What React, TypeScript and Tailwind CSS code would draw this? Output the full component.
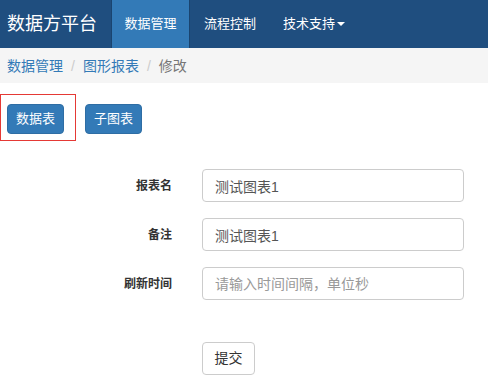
export default function App() {
  const fields = [
    { label: "报表名", value: "测试图表1", placeholder: "" },
    { label: "备注", value: "测试图表1", placeholder: "" },
    { label: "刷新时间", value: "", placeholder: "请输入时间间隔，单位秒" },
  ];

  return (
    <div
      className="w-[488px] h-[385px] bg-white overflow-hidden"
      style={{ fontFamily: '"Liberation Sans", "Noto Sans CJK SC", sans-serif' }}
    >
      {/* Navbar */}
      <nav className="h-[48px] bg-[#1f4e7f] flex items-stretch">
        <div className="w-[111px] flex items-center pl-[7px] text-[18px] text-white whitespace-nowrap">数据方平台</div>
        <div className="w-[79px] flex items-center justify-center bg-[#337ab7] text-[13px] text-white border-x border-[#1a446f] whitespace-nowrap">
          数据管理
        </div>
        <div className="pl-[14px] pr-[27px] flex items-center text-[13px] text-white whitespace-nowrap">流程控制</div>
        <div className="flex items-center text-[13px] text-white whitespace-nowrap">
          技术支持
          <span className="ml-[2px] inline-block w-0 h-0 border-x-[4px] border-x-transparent border-t-[4px] border-t-white" />
        </div>
      </nav>

      {/* Breadcrumb */}
      <div className="h-[35px] bg-[#f5f5f5] flex items-center pl-[7px] pt-[1px] text-[14px] whitespace-nowrap">
        <span className="text-[#337ab7]">数据管理</span>
        <span className="px-[8px] text-[#ccc]">/</span>
        <span className="text-[#337ab7]">图形报表</span>
        <span className="px-[8px] text-[#ccc]">/</span>
        <span className="text-[#777]">修改</span>
      </div>

      {/* Tabs */}
      <div className="flex items-start mt-[11px]">
        <div className="w-[76px] h-[47px] border border-[#e53935] pl-[6px] pt-[9px]">
          <button className="w-[57px] h-[30px] rounded-[4px] bg-[#337ab7] border border-[#2e6da4] text-white text-[13px]">
            数据表
          </button>
        </div>
        <button className="ml-[9px] mt-[10px] w-[57px] h-[30px] rounded-[4px] bg-[#337ab7] border border-[#2e6da4] text-white text-[13px]">
          子图表
        </button>
      </div>

      {/* Form */}
      <div className="mt-[28px] flex flex-col gap-[16px]">
        {fields.map((f) => (
          <div key={f.label} className="flex items-center">
            <label className="w-[172px] text-right text-[12px] font-bold text-[#333]">{f.label}</label>
            <input
              readOnly
              value={f.value}
              placeholder={f.placeholder}
              className="ml-[30px] w-[262px] h-[33px] rounded-[4px] border border-[#ccc] px-[12px] text-[14px] text-[#555] placeholder:text-[#999] outline-none"
            />
          </div>
        ))}
      </div>

      <div className="mt-[42px] pl-[202px]">
        <button className="w-[53px] h-[33px] rounded-[4px] border border-[#ccc] bg-white text-[14px] text-[#333]">
          提交
        </button>
      </div>
    </div>
  );
}
